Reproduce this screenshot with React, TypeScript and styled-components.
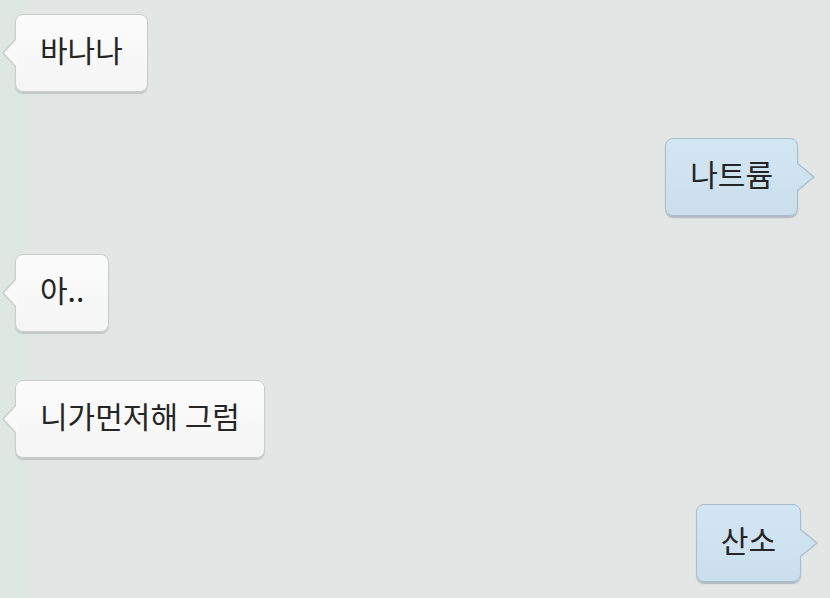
import React from "react";
import styled, { createGlobalStyle, css } from "styled-components";

const Global = createGlobalStyle`
  html, body {
    margin: 0;
    padding: 0;
    background: #e2e6e5;
  }
  body {
    font-family: "Noto Sans CJK KR", "Noto Sans", sans-serif;
  }
`;

const Screen = styled.div`
  width: 830px;
  height: 598px;
  overflow: hidden;
  display: flex;
  flex-direction: column;
  background: linear-gradient(to right, #dde8e3 0, #dde8e3 24px, #e2e6e5 24px);
`;

const Row = styled.div<{ $mine?: boolean; $gap: number; $edge: number }>`
  display: flex;
  justify-content: ${(p) => (p.$mine ? "flex-end" : "flex-start")};
  margin-top: ${(p) => p.$gap}px;
  ${(p) =>
    p.$mine
      ? css`
          padding-right: ${p.$edge}px;
        `
      : css`
          padding-left: ${p.$edge}px;
        `}
`;

const Bubble = styled.div<{ $mine?: boolean }>`
  position: relative;
  box-sizing: border-box;
  height: 78px;
  padding: 17px 24px 25px;
  border-radius: 8px;
  font-size: 30px;
  line-height: 34px;
  color: #252525;
  white-space: nowrap;
  background: ${(p) =>
    p.$mine
      ? "linear-gradient(#d3e6f4, #cbdeec)"
      : "linear-gradient(#fbfbfb, #f5f5f5)"};
  border: 1px solid ${(p) => (p.$mine ? "#a9bccb" : "#cbcdcd")};
  box-shadow: 0 2px 1px ${(p) =>
    p.$mine ? "rgba(90, 110, 125, 0.35)" : "rgba(120, 125, 125, 0.3)"};

  &::before,
  &::after {
    content: "";
    position: absolute;
    top: 24px;
    width: 0;
    height: 0;
    border-top: 14px solid transparent;
    border-bottom: 14px solid transparent;
  }

  ${(p) =>
    p.$mine
      ? css`
          &::before {
            right: -18px;
            border-left: 17px solid #a9bccb;
          }
          &::after {
            right: -16px;
            border-left: 17px solid #cfe2f0;
          }
        `
      : css`
          &::before {
            left: -14px;
            border-right: 13px solid #cbcdcd;
          }
          &::after {
            left: -12px;
            border-right: 13px solid #f9f9f9;
          }
        `}
`;

type Msg = { text: string; mine?: boolean; gap: number; edge: number };

const messages: Msg[] = [
  { text: "바나나", gap: 14, edge: 15 },
  { text: "나트륨", mine: true, gap: 46, edge: 32 },
  { text: "아..", gap: 38, edge: 15 },
  { text: "니가먼저해 그럼", gap: 48, edge: 15 },
  { text: "산소", mine: true, gap: 46, edge: 29 },
];

export default function App() {
  return (
    <>
      <Global />
      <Screen>
        {messages.map((m, i) => (
          <Row key={i} $mine={m.mine} $gap={m.gap} $edge={m.edge}>
            <Bubble $mine={m.mine}>{m.text}</Bubble>
          </Row>
        ))}
      </Screen>
    </>
  );
}
